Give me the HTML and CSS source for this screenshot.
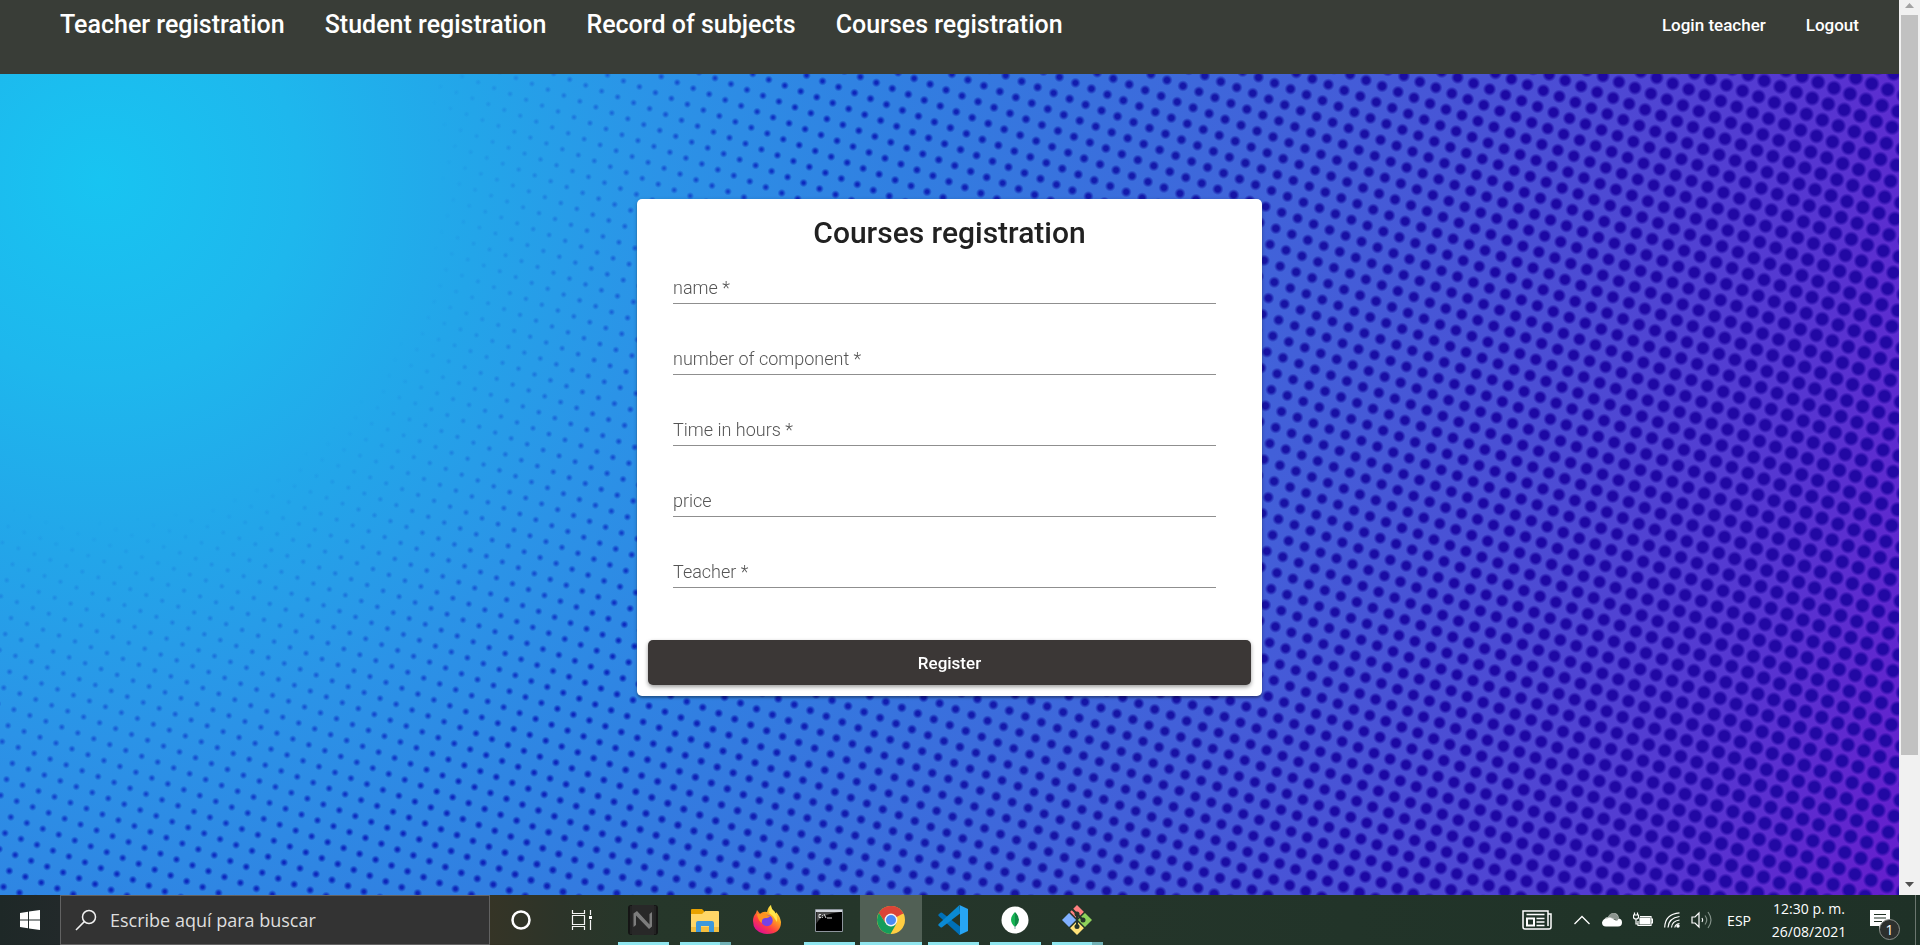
FILE: index.html
```html
<!DOCTYPE html>
<html lang="en">
<head>
<meta charset="utf-8">
<title>Courses registration</title>
<link rel="stylesheet" href="styles.css">
</head>
<body>
<div class="browser">
  <div class="page">
    <nav class="topbar">
      <div class="topbar-main">
        <a href="#">Teacher registration</a>
        <a href="#">Student registration</a>
        <a href="#">Record of subjects</a>
        <a href="#">Courses registration</a>
      </div>
      <div class="topbar-user">
        <a href="#">Login teacher</a>
        <a href="#">Logout</a>
      </div>
    </nav>
    <main class="stage">
      <canvas class="dots" id="dots"></canvas>
      <form class="card">
        <h1>Courses registration</h1>
        <div class="fields">
          <div class="field"><label for="name">name *</label><input id="name" type="text"></div>
          <div class="field"><label for="component">number of component *</label><input id="component" type="text"></div>
          <div class="field"><label for="hours">Time in hours *</label><input id="hours" type="text"></div>
          <div class="field"><label for="price">price</label><input id="price" type="text"></div>
          <div class="field"><label for="teacher">Teacher *</label><input id="teacher" type="text"></div>
        </div>
        <button class="submit" type="button">Register</button>
      </form>
    </main>
  </div>
  <div class="scrollbar">
    <svg class="arrow" width="21" height="15" viewBox="0 0 21 15"><path d="M6 8h9L10.500 3z" fill="#a3a3a3"/></svg>
    <div class="track"><div class="thumb"></div></div>
    <svg class="arrow" width="21" height="19" viewBox="0 0 21 19"><path d="M6 6h9L10.500 11z" fill="#505050"/></svg>
  </div>
</div>

<footer class="taskbar">
  <button class="start" type="button" aria-label="Start">
    <svg width="20" height="20" viewBox="0 0 20 20" fill="#fff"><path d="M0 3l8-1.200V9.500H0zM9 1.600L20 0v9.500H9zM0 10.500h8v7.700L0 17zM9 10.500h11V20L9 18.400z"/></svg>
  </button>
  <label class="search">
    <svg width="22" height="22" viewBox="0 0 22 22" fill="none" stroke="#f2f2f2" stroke-width="1.500"><circle cx="14" cy="8" r="6.500"/><path d="M9.300 12.600L1 21"/></svg>
    <input type="text" placeholder="Escribe aquí para buscar" aria-label="Escribe aquí para buscar">
  </label>
  <div class="apps">
    <button class="app tool" type="button" aria-label="Cortana"><svg width="22" height="22" viewBox="0 0 22 22"><circle cx="11" cy="11" r="8.500" fill="none" stroke="#fff" stroke-width="2.500"/></svg></button>
    <button class="app tool" type="button" aria-label="Task view"><svg width="22" height="22" viewBox="0 0 22 22" fill="none" stroke="#f4f4f4" stroke-width="1.200"><path d="M1.500 1v3.500h12V1M1.500 21v-3.500h12V21M1.500 6.500h12v9h-12zM19.500 1v5M19.500 11v10"/><path d="M18 7h3v3h-3z" fill="#fff" stroke="none"/></svg></button>
    <button class="app open" type="button" aria-label="N">
      <svg width="30" height="30" viewBox="0 0 30 30"><rect width="30" height="30" rx="3" fill="#151515"/><path d="M4 0h22v30H4z" fill="#282828"/><path d="M3 1v28M27 1v28" stroke="#414141" stroke-width=".7"/><path d="M5.500 22V8.500L9 6l12.500 13.500V9L24 7v14.500L21 24 8 10.500V20z" fill="#7c7c7c"/></svg>
    </button>
    <button class="app open many" type="button" aria-label="File Explorer">
      <svg width="28" height="28" viewBox="0 0 28 28"><path d="M0 4q0-1 1-1h10l2 2v4H0z" fill="#e8a200"/><path d="M0 8h11l3-3h13q1 0 1 1v19q0 1-1 1H1q-1 0-1-1z" fill="#ffd667"/><path d="M0 21h28v4q0 1-1 1H1q-1 0-1-1z" fill="#f4be3e"/><path d="M5 26V17q0-2 2-2h14q2 0 2 2v9h-5v-6h-8v6z" fill="#3c98dc"/></svg>
    </button>
    <button class="app" type="button" aria-label="Firefox">
      <svg width="30" height="30" viewBox="0 0 30 30"><defs><linearGradient id="ff" x1=".8" y1=".1" x2=".25" y2=".9"><stop offset="0" stop-color="#fff44f"/><stop offset=".35" stop-color="#ffa01f"/><stop offset=".7" stop-color="#ff4040"/><stop offset="1" stop-color="#e31587"/></linearGradient></defs><path d="M5 5l3 4q3-3 7-2 1-5 4-7 0 4 3 6l2 3 0-2q4 4 5 10 0 12-14 12Q1 28 1 16q0-5 3-8z" fill="url(#ff)"/><circle cx="15" cy="15.500" r="5.700" fill="#7542e5"/><path d="M5 9q5-1 10 1l3 1q-1 2-5 2-4 1-3 5-4-2-5-9z" fill="#ff9321"/><path d="M19 0q0 4 3 6 4 5 3 11l-4-6-4-3z" fill="#ffe64b"/></svg>
    </button>
    <button class="app open" type="button" aria-label="Command prompt">
      <svg width="28" height="23" viewBox="0 0 28 23"><path d="M.5.500h27v22H.5z" fill="#000" stroke="#8d949c"/><path d="M1 1h26v2H1z" fill="#d2d6dc"/><path d="M1.500 3h24Q5 5 1.500 15z" fill="#484848"/><path d="M6 5.500H4v3h2M7.500 6v.800M7.500 8v.800M9 5l2 4M12 9h5" stroke="#ddd" fill="none"/></svg>
    </button>
    <button class="app open active" type="button" aria-label="Chrome">
      <svg width="28" height="28" viewBox="0 0 28 28"><circle cx="14" cy="14" r="14" fill="#ffcd41"/><path d="M14 14L1.900 7A14 14 0 0 1 26.100 7.500z" fill="#db4437"/><path d="M14 7.700h12.500A14 14 0 0 0 1.900 7l6.600 10z" fill="#db4437"/><path d="M1.900 7A14 14 0 0 0 13.500 28L19.500 17.500 14 14l-5.500 3z" fill="#159d5b"/><circle cx="14" cy="14" r="6.400" fill="#f4f4f4"/><circle cx="14" cy="14" r="5" fill="#4a8af4"/></svg>
    </button>
    <button class="app open" type="button" aria-label="Visual Studio Code">
      <svg width="30" height="30" viewBox="0 0 30 30"><path d="M21.500 30L.7 11q-.8-1 0-1.800L2.500 7.700q.8-.6 1.600 0L22 21.500V30z" fill="#0070b8"/><path d="M21.500 0L.7 19q-.8 1 0 1.800l1.800 1.500q.8.600 1.600 0L22 8.500z" fill="#0a8ad4"/><path d="M21.500 0L30 4v22l-8.500 4q.5-1 .5-2V2q0-1-.5-2z" fill="#27a5f5"/></svg>
    </button>
    <button class="app open" type="button" aria-label="MongoDB Compass">
      <svg width="28" height="28" viewBox="0 0 28 28"><circle cx="14" cy="14" r="13.500" fill="#fff"/><path d="M14 6q-8 8 0 15z" fill="#16b354"/><path d="M14 6q8 8 0 15z" fill="#0f8a45"/><path d="M14 20v3" stroke="#8aa" stroke-width="1"/></svg>
    </button>
    <button class="app open many" type="button" aria-label="Git Bash">
      <svg width="30" height="30" viewBox="0 0 30 30"><path d="M15 0l7 7-7 7-7-7z" fill="#ff8080"/><path d="M7.500 7.500L15 15l-7.500 7.500L0 15z" fill="#80b0ff"/><path d="M22.500 7.500L30 15l-7.500 7.500L15 15z" fill="#8fd35a"/><path d="M15 16l7 7-7 7-7-7z" fill="#ffe278"/><path d="M7 7l16 16M23 7L7 23" stroke="#26352a" stroke-width="1.200"/><path d="M10 4l5 5v13M15 9l6 6" stroke="#26352a" stroke-width="2" fill="none"/><g fill="#26352a"><circle cx="15" cy="9" r="2.500"/><circle cx="21" cy="15" r="2.500"/><circle cx="15" cy="21.500" r="2.500"/></g></svg>
    </button>
  </div>
  <div class="tray">
    <svg class="news" width="30" height="20" viewBox="0 0 30 20" fill="none" stroke="#fff" stroke-width="1.500"><path d="M26 4h3v13q0 2-2 2H3q-2 0-2-2V1h25v15"/><path d="M4.500 4.500h18M14.500 8.500h8M14.500 12h8M14.500 15.500h8"/><path d="M5 8.500h7v7H5z" stroke-width="2"/></svg>
    <svg class="chevron" width="16" height="10" viewBox="0 0 16 10" fill="none" stroke="#fff" stroke-width="1.300"><path d="M.5 9L8 1.500 15.500 9"/></svg>
    <svg width="20" height="14" viewBox="0 0 20 14"><path d="M2 9q0-5 4-5 2-4 6-4 4 0 5 5z" fill="#b5bbb7"/><path d="M4 13.500q-4 0-4-4 1-4 5-4l3-1 6 3 2-2q4 0 4 4t-4 4z" fill="#fff"/><path d="M6 4q5 0 9 4l2-3Q15 1 12 0 8 0 6 4z" fill="#8c958f"/></svg>
    <svg width="20" height="16" viewBox="0 0 20 16" fill="none" stroke="#fff" stroke-width="1.200"><path d="M7 4.500h11v9H5V9M18 7h1.500v4H18"/><path d="M7 6h9.500v6H7z" fill="#fff"/><path d="M1.500.500v2M4.500.500v2M.5 3h5v2q0 2-2.500 2T.5 5zM3 7v5h2"/></svg>
    <svg width="16" height="16" viewBox="0 0 16 16" fill="none" stroke="#fff" stroke-width="1.200"><path d="M.7 15.500Q1 2 15.500.800M4 15.500Q4.500 6 15.500 4.500M7.500 15.500Q8 9 15.500 8M10.800 15.500q.5-3.500 4.700-4"/><circle cx="14" cy="14" r="1.700" fill="#fff" stroke="none"/></svg>
    <svg width="21" height="18" viewBox="0 0 21 18" fill="none" stroke="#fff" stroke-width="1.200"><path d="M1 6h3l4-4v14l-4-4H1zM11 7q1.500 2 0 4"/><path d="M14 4.500q3.500 4.500 0 9M17 1q6 8 0 16" stroke="#829087"/></svg>
    <span class="lang">ESP</span>
    <div class="clock"><span>12:30 p. m.</span><span>26/08/2021</span></div>
    <button class="notify" type="button" aria-label="Notifications">
      <svg width="20" height="20" viewBox="0 0 20 20"><path d="M0 0h20v16h-7l-4 4v-4H0z" fill="#fff"/><path d="M4 4.500h12M4 8h12M4 11.500h8" stroke="#203024" stroke-width="1.200"/></svg>
      <span class="badge">1</span>
    </button>
    <span class="peek"></span>
  </div>
</footer>
<script src="dots.js"></script>
</body>
</html>
```
FILE: styles.css
```css
* { box-sizing: border-box; }

body {
  margin: 0;
  height: 100vh;
  display: flex;
  flex-direction: column;
  overflow: hidden;
  font-family: Roboto, "Liberation Sans", sans-serif;
}

button { font: inherit; border: 0; padding: 0; background: none; }

.browser { flex: 1; min-height: 0; display: flex; }
.page { flex: 1; min-width: 0; display: flex; flex-direction: column; }

.topbar {
  display: flex;
  justify-content: space-between;
  background: #393d37;
  padding: 5px 20px 29px 40px;
}
.topbar-main, .topbar-user { display: flex; align-items: center; }
.topbar a {
  color: #fff;
  text-decoration: none;
  font-weight: 500;
  line-height: 40px;
  padding: 0 20px;
}
.topbar-main a { font-size: 25px; }
.topbar-user a { font-size: 17px; }

.stage {
  position: relative;
  flex: 1;
  min-height: 0;
  padding-top: 125px;
  background: radial-gradient(circle at 100px 106px,
    #18c4f1 0, #1eb7ed 200px, #23a5e9 380px, #2b93e7 560px, #317fe1 800px,
    #4064da 1150px, #4d4ad4 1500px, #5635d1 1720px, #641fcd 1920px);
}
.dots { position: absolute; inset: 0; width: 100%; height: 100%; }

.card {
  position: relative;
  width: 625px;
  margin: 0 auto;
  padding: 15px 11px 11px;
  background: #fff;
  border-radius: 5px;
  box-shadow: 0 2px 2px rgba(0, 0, 0, .25), 0 1px 4px rgba(0, 0, 0, .2);
}
.card h1 {
  margin: 0 0 20px;
  font-size: 30px;
  font-weight: 500;
  line-height: 38px;
  text-align: center;
  color: #212121;
}
.fields { padding: 0 35px 0 25px; }
.field { display: grid; margin-bottom: 39px; }
.field label, .field input { grid-area: 1 / 1; height: 32px; }
.field label {
  font-size: 18px;
  font-weight: 300;
  line-height: 32px;
  color: #555;
  pointer-events: none;
}
.field input {
  width: 100%;
  padding: 0;
  border: 0;
  border-bottom: 1px solid #8f8f8f;
  background: none;
  font: inherit;
  outline: 0;
}
.submit {
  display: block;
  width: 100%;
  height: 45px;
  margin-top: 52px;
  border-radius: 5px;
  background: #3b3736;
  color: #fff;
  font-size: 17px;
  font-weight: 500;
  box-shadow: 0 2px 4px rgba(0, 0, 0, .4);
}

.scrollbar { width: 21px; display: flex; flex-direction: column; background: #f1f1f1; }
.arrow { display: block; }
.track { flex: 1; padding: 0 2px; }
.thumb { height: 86%; background: #c1c1c1; }

.taskbar {
  height: 50px;
  display: flex;
  background: linear-gradient(90deg, #1e2827 0, #22292a 60px, #353426 490px, #2c3429 560px, #26372a 640px, #24352a 1100px, #203328 1600px, #1f3127 100%);
  color: #fff;
  font-family: "Open Sans", "Noto Sans", sans-serif;
}
.start, .app { display: flex; align-items: center; justify-content: center; }
.start { width: 60px; }
.search {
  width: 430px;
  display: flex;
  align-items: center;
  gap: 13px;
  padding-left: 14px;
  background: #333;
  border: 1px solid #626262;
}
.search input {
  flex: 1;
  min-width: 0;
  border: 0;
  padding: 0;
  background: none;
  color: #fff;
  font: 18px/26px "Open Sans", "Noto Sans", sans-serif;
}
.search input::placeholder { color: #dedede; opacity: 1; }
.apps { display: flex; }
.app { position: relative; width: 62px; }
.app.tool { width: 61px; }
.app.open::after {
  content: "";
  position: absolute;
  left: 6px;
  right: 5px;
  bottom: 0;
  height: 3px;
  background: #8fe6ef;
}
.app.many::after { background: linear-gradient(90deg, #8fe6ef 40px, #6fb0b5 40px); }
.app.active { background: #516055; }
.app.active::after { left: 0; right: 0; }

.tray { margin-left: auto; display: flex; align-items: center; }
.tray svg { margin-right: 11px; }
.tray .news { margin-right: 22px; }
.tray .chevron { margin-right: 12px; }
.lang { margin: 0 18px 0 4px; font-size: 14px; }
.clock {
  width: 80px;
  display: flex;
  flex-direction: column;
  align-items: center;
  font-size: 14px;
  line-height: 23px;
}
.notify { position: relative; display: flex; margin-left: 21px; }
.tray .notify svg { margin: 0; }
.badge {
  position: absolute;
  left: 9px;
  top: 9px;
  width: 21px;
  height: 21px;
  border: 1px solid #8a8f8b;
  border-radius: 50%;
  background: #2c302e;
  color: #fff;
  font-size: 14px;
  line-height: 19px;
  text-align: center;
}
.peek { align-self: stretch; width: 5px; margin-left: 25px; border-left: 1px solid #6b766f; }
```
FILE: dots.js
```js
// Halftone pattern: a tilted square lattice whose dots grow with the
// distance from the bright spot of the gradient.
const canvas = document.getElementById('dots');
const step = { x: 15.98, y: 5.83 };
const origin = { x: 1752, y: 636 };
const light = { x: 100, y: 106 };
const mix = (a, b, t) => Math.round(a + (b - a) * t);
const clamp = (v) => Math.max(0, Math.min(1, v));

function draw() {
  const w = canvas.width = canvas.clientWidth;
  const h = canvas.height = canvas.clientHeight;
  const ctx = canvas.getContext('2d');
  const reach = Math.ceil((w + h) / 16) + 120;
  for (let i = -reach; i < reach; i++) {
    for (let j = -reach; j < reach; j++) {
      const x = origin.x + i * step.x - j * step.y;
      const y = origin.y + i * step.y + j * step.x;
      if (x < -10 || y < -10 || x > w + 10 || y > h + 10) continue;
      const d = Math.hypot(x - light.x, y - light.y);
      const alpha = clamp((d - 340) / 360);
      if (!alpha) continue;
      const r = 1.5 + clamp((d - 340) / 1400) * 5.2;
      const t = clamp((d - 500) / 1200);
      const rgb = `${mix(8, 34, t)},${mix(50, 8, clamp(t * 1.3))},${mix(200, 164, clamp(t * 1.8))}`;
      const fill = ctx.createRadialGradient(x, y, Math.max(0, r - 1.8), x, y, r + 1.4);
      fill.addColorStop(0, `rgba(${rgb},${alpha})`);
      fill.addColorStop(1, `rgba(${rgb},0)`);
      ctx.fillStyle = fill;
      ctx.fillRect(x - r - 2, y - r - 2, 2 * r + 4, 2 * r + 4);
    }
  }
}

draw();
window.addEventListener('resize', draw);
```
